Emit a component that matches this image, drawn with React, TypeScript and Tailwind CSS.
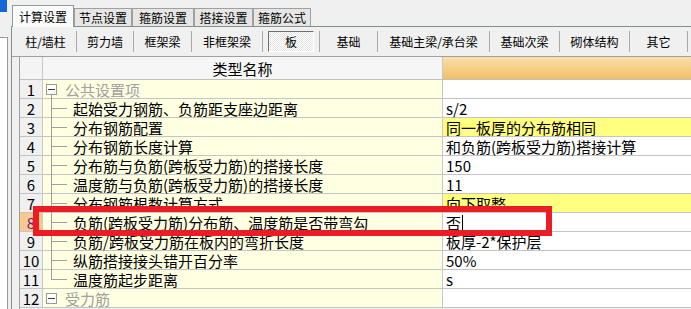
import React from "react";

const F = { fontFamily: '"Noto Sans CJK SC", "Noto Sans", sans-serif' };

type Row = { n: number; name: string; value: string; group?: boolean; hl?: boolean; sel?: boolean; last?: boolean };

const rows: Row[] = [
  { n: 1, name: "公共设置项", value: "", group: true },
  { n: 2, name: "起始受力钢筋、负筋距支座边距离", value: "s/2" },
  { n: 3, name: "分布钢筋配置", value: "同一板厚的分布筋相同", hl: true },
  { n: 4, name: "分布钢筋长度计算", value: "和负筋(跨板受力筋)搭接计算" },
  { n: 5, name: "分布筋与负筋(跨板受力筋)的搭接长度", value: "150" },
  { n: 6, name: "温度筋与负筋(跨板受力筋)的搭接长度", value: "11" },
  { n: 7, name: "分布钢筋根数计算方式", value: "向下取整", hl: true },
  { n: 8, name: "负筋(跨板受力筋)分布筋、温度筋是否带弯勾", value: "否", sel: true },
  { n: 9, name: "负筋/跨板受力筋在板内的弯折长度", value: "板厚-2*保护层" },
  { n: 10, name: "纵筋搭接接头错开百分率", value: "50%" },
  { n: 11, name: "温度筋起步距离", value: "s", last: true },
  { n: 12, name: "受力筋", value: "", group: true },
];

const tabs = [
  { t: "计算设置", w: 62, active: true },
  { t: "节点设置", w: 58 },
  { t: "箍筋设置", w: 62 },
  { t: "搭接设置", w: 59 },
  { t: "箍筋公式", w: 58 },
];

const tools = [
  { t: "柱/墙柱", w: 62 },
  { t: "剪力墙", w: 57 },
  { t: "框架梁", w: 58 },
  { t: "非框架梁", w: 71 },
  { t: "板", w: 57, pressed: true },
  { t: "基础", w: 58 },
  { t: "基础主梁/承台梁", w: 112 },
  { t: "基础次梁", w: 70 },
  { t: "砌体结构", w: 70 },
  { t: "其它", w: 58 },
];

function MinusBox() {
  return (
    <div className="w-[11px] h-[11px] border border-[#9a9a9a] bg-white flex items-center justify-center shrink-0">
      <div className="w-[7px] h-[1px] bg-[#404040]" />
    </div>
  );
}

export default function App() {
  return (
    <div className="w-[691px] h-[309px] bg-[#f0f0f0] relative overflow-hidden flex text-black" style={F}>
      {/* left strip */}
      <div className="w-[11px] h-full flex flex-col shrink-0">
        <div className="w-[7px] h-[12px] bg-[#1467d6]" />
        <div className="h-[25px]" />
        <div className="w-[8px] flex-1 bg-white border-t border-r border-[#9a9a9a]" />
      </div>

      {/* main */}
      <div className="flex-1 flex flex-col">
        {/* tabs */}
        <div className="h-[26px] flex items-end pl-[1px]">
          {tabs.map((tb) =>
            tb.active ? (
              <div
                key={tb.t}
                className="h-[22px] mb-[-1px] relative z-10 bg-[#fbfbfb] border border-b-0 border-[#8c9a9a] flex items-center justify-center text-[12px] leading-none"
                style={{ width: tb.w }}
              >
                {tb.t}
              </div>
            ) : (
              <div
                key={tb.t}
                className="h-[18px] bg-[#e6e6e6] border border-b-0 border-[#a0a0a0] flex items-center justify-center text-[12px] leading-none"
                style={{ width: tb.w }}
              >
                {tb.t}
              </div>
            )
          )}
        </div>

        {/* panel */}
        <div className="flex-1 border-t border-l border-[#7f9090] flex flex-col">
          {/* toolbar */}
          <div className="h-[30px] flex items-center pl-[3px] border-b border-[#a0a0a0]">
            {tools.map((b) => (
              <div key={b.t} className="h-[21px] flex items-center border-r border-[#a8a8a8] shrink-0" style={{ width: b.w }}>
                {b.pressed ? (
                  <div className="ml-[5px] w-[46px] h-[21px] border-t border-l border-[#707070] border-b border-r border-b-[#fff] border-r-[#fff] bg-[repeating-conic-gradient(#e4e4e4_0_25%,#ffffff_0_50%)] bg-[length:2px_2px] flex items-center justify-center text-[12px] leading-none">
                    {b.t}
                  </div>
                ) : (
                  <div className="w-full text-center text-[12px] leading-none">{b.t}</div>
                )}
              </div>
            ))}
          </div>

          {/* grid */}
          <div className="flex-1 pl-[7px]">
            <div className="border-l border-[#a0a0a0] h-full">
              {/* header */}
              <div className="h-[23px] flex border-b border-[#c0c0c0]">
                <div className="w-[23px] bg-[#f4f4f4] border-r border-[#c8c8c8]" />
                <div className="w-[400px] bg-[#f6f6f6] border-r border-[#c8c8c8] flex items-center justify-center text-[15px] leading-none">
                  类型名称
                </div>
                <div className="flex-1 bg-gradient-to-b from-[#fbdeab] to-[#f0c062]" />
              </div>
              {rows.map((r) => (
                <div key={r.n} className="h-[19px] flex border-b border-[#c4c4c4]">
                  <div
                    className={
                      "w-[23px] border-r border-[#c8c8c8] flex items-center justify-center text-[15px] leading-none " +
                      (r.sel ? "bg-[#f8c98c] text-[#5a1a8a]" : "bg-[#f0f0f0]")
                    }
                  >
                    {r.n}
                  </div>
                  <div className="w-[400px] bg-[#ffffe1] border-r border-[#c8c8c8] relative flex items-center">
                    {r.group ? (
                      <div className="flex items-center pl-[3px]">
                        <MinusBox />
                        <span className="ml-[8px] text-[15px] leading-none text-[#a0a0a0]">{r.name}</span>
                      </div>
                    ) : (
                      <>
                        <div
                          className={"absolute left-[8px] top-[-1px] w-[1px] bg-[#a0a0a0] " + (r.last ? "h-[10px]" : "h-[20px]")}
                        />
                        <div className="absolute left-[8px] top-[9px] w-[16px] h-[1px] bg-[#a0a0a0]" />
                        <span className="ml-[30px] text-[15px] leading-none whitespace-nowrap">{r.name}</span>
                      </>
                    )}
                    {r.n === 1 && <div className="absolute left-[8px] top-[15px] w-[1px] h-[4px] bg-[#a0a0a0]" />}
                  </div>
                  <div className={"flex-1 flex items-center pl-[3px] text-[15px] leading-none " + (r.hl ? "bg-[#ffff80]" : "bg-white")}>
                    <span className="whitespace-nowrap">{r.value}</span>
                    {r.sel && <span className="w-[1px] h-[15px] bg-black ml-[1px]" />}
                  </div>
                </div>
              ))}
            </div>
          </div>
        </div>
      </div>

      {/* red highlight box */}
      <div className="absolute left-[33px] top-[206px] w-[519px] h-[30px] border-[6px] border-[#ec1c24]" />
    </div>
  );
}
